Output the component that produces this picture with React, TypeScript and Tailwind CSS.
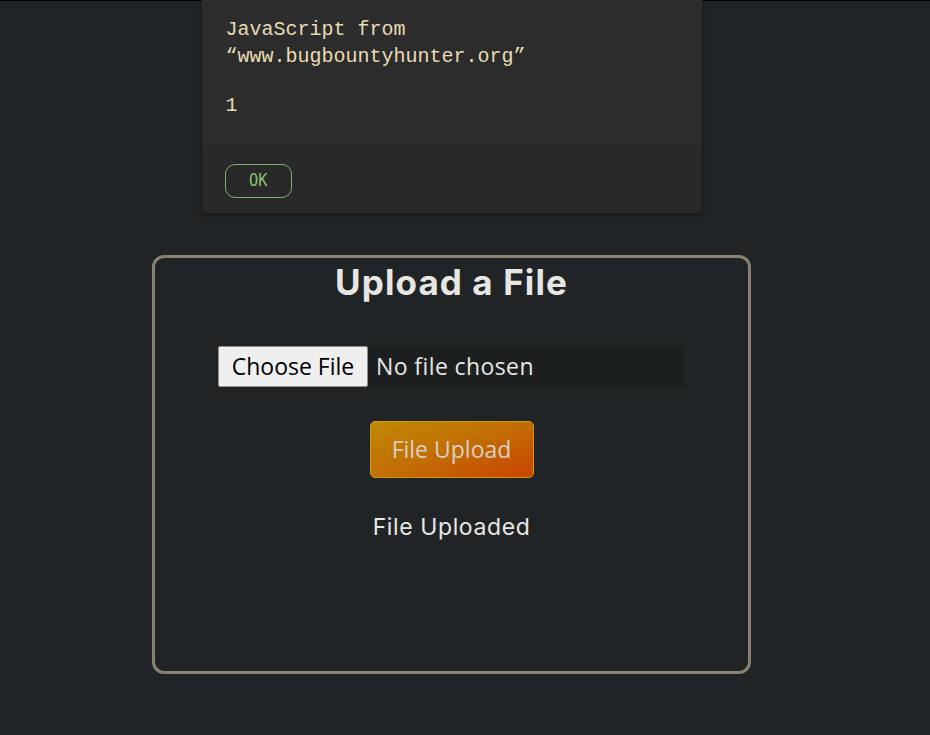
import React from 'react';

export default function App() {
  return (
    <div className="min-h-[735px] w-full bg-[#212426] border-t border-black">
      <div className="w-[903px] flex flex-col items-center">
        {/* alert dialog */}
        <div className="w-[500px] -mt-px rounded-b-md bg-[#2c2c2c] shadow-[0_2px_6px_rgba(0,0,0,0.35)] font-['Liberation_Mono',monospace] text-[#e9dbb3]">
          <div className="px-6 pt-[16px] pb-[27px] text-[20px] leading-[27px]">
            <p>JavaScript from</p>
            <p>“www.bugbountyhunter.org”</p>
            <p className="mt-[22px]">1</p>
          </div>
          <div className="border-t border-[#262626] bg-[#292929] px-[23px] pt-[17px] pb-[15px] rounded-b-md">
            <button className="w-[67px] h-[34px] rounded-[10px] border border-[#7db568] text-[#86c271] text-[17px] font-['DejaVu_Sans_Mono',monospace]">
              <span className="inline-block scale-x-90">OK</span>
            </button>
          </div>
        </div>

        {/* upload card */}
        <div className="mt-[42px] w-[599px] h-[419px] rounded-xl border-[3px] border-[#8a8172] flex flex-col items-center">
          <h1 className="mt-[2px] text-[35px] leading-[44px] font-bold tracking-[1.1px] text-[#e8e6e3] font-['Inter',sans-serif]">
            Upload a File
          </h1>

          <div className="mt-[42px] flex items-center w-[467px] h-[41px] bg-[#1c1f20] font-['Open_Sans',sans-serif] text-[23px]">
            <span className="h-[41px] w-[150px] flex items-center justify-center bg-[#efefef] border border-[#8f8f8f] rounded-[2px] text-black">
              Choose File
            </span>
            <span className="ml-[8px] tracking-[0.4px] text-[#e8e6e3]">No file chosen</span>
          </div>

          <button className="mt-[34px] w-[164px] h-[57px] rounded-[5px] border border-[#cf9a08] bg-[linear-gradient(160deg,#c08904_0%,#c26d04_50%,#ca4300_100%)] text-[#d8cfc4] text-[23px] font-['Open_Sans',sans-serif]">
            File Upload
          </button>

          <p className="mt-[32px] text-[23px] text-[#e8e6e3] font-['Inter',sans-serif] font-normal tracking-[0.6px]">
            File Uploaded
          </p>
        </div>
      </div>
    </div>
  );
}
